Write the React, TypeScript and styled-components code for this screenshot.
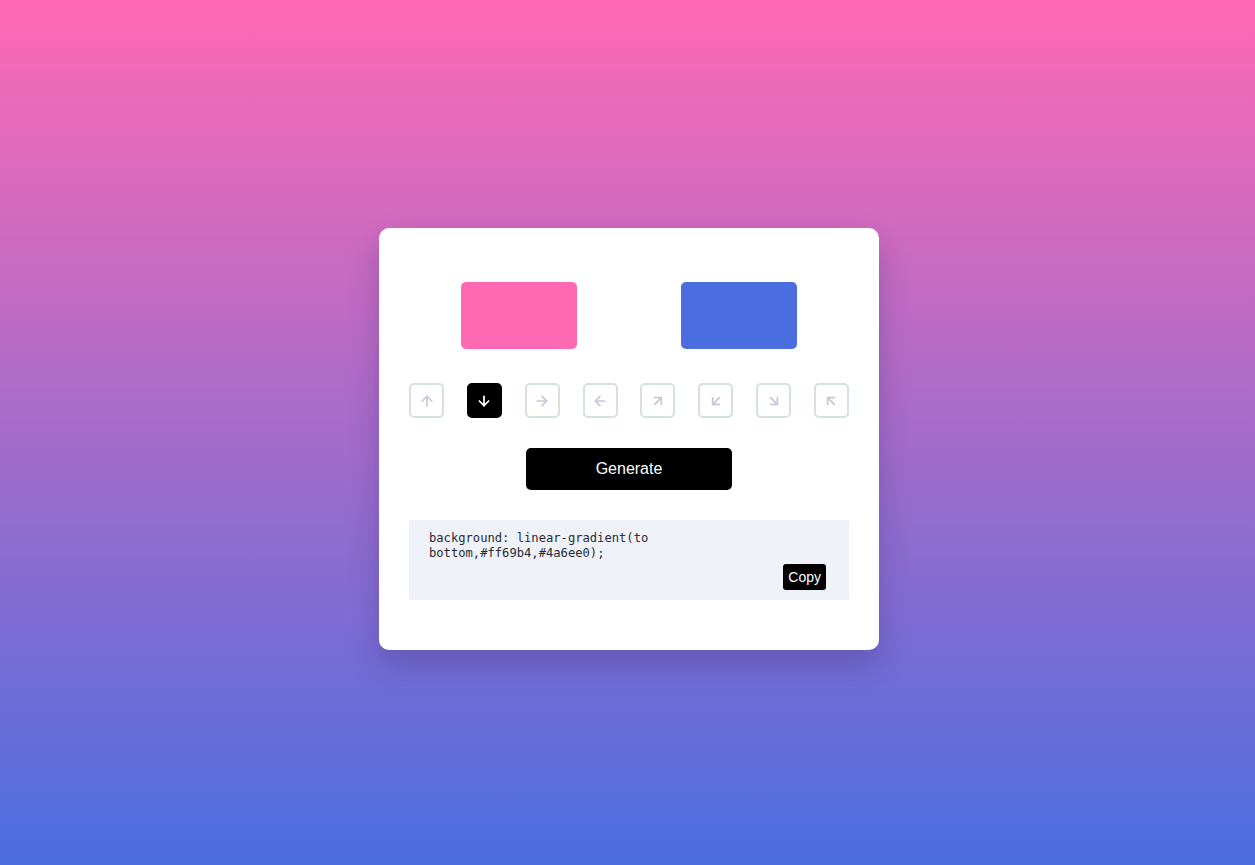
import React, { useState } from "react";
import styled, { createGlobalStyle } from "styled-components";
import {
  ArrowUp,
  ArrowDown,
  ArrowRight,
  ArrowLeft,
  ArrowUpRight,
  ArrowDownLeft,
  ArrowDownRight,
  ArrowUpLeft,
} from "lucide-react";

const Global = createGlobalStyle`
  html, body { margin: 0; padding: 0; }
  body { font-family: "Liberation Sans", Arial, sans-serif; }
`;

const Page = styled.div`
  width: 100%;
  min-height: 865px;
  background: linear-gradient(to bottom, #ff69b4, #4a6ee0);
  display: flex;
  justify-content: center;
  padding-top: 228px;
  padding-left: 3px;
  box-sizing: border-box;
`;

const Card = styled.div`
  width: 500px;
  height: 422px;
  background: #fff;
  border-radius: 10px;
  box-shadow: 0 15px 30px rgba(60, 40, 110, 0.3);
  padding: 54px 30px 30px;
  box-sizing: border-box;
  display: flex;
  flex-direction: column;
`;

const Swatches = styled.div`
  display: flex;
  justify-content: space-around;
`;

const Swatch = styled.div<{ $c: string }>`
  width: 116px;
  height: 67px;
  border-radius: 5px;
  background: ${(p) => p.$c};
`;

const Directions = styled.div`
  display: flex;
  justify-content: space-between;
  margin-top: 34px;
`;

const DirButton = styled.button<{ $active: boolean }>`
  width: 35px;
  height: 35px;
  box-sizing: border-box;
  border-radius: 5px;
  border: 2px solid ${(p) => (p.$active ? "#000" : "#d5e1dd")};
  background: ${(p) => (p.$active ? "#000" : "#fff")};
  color: ${(p) => (p.$active ? "#fff" : "#c9c6d8")};
  display: flex;
  align-items: center;
  justify-content: center;
  padding: 0;
  cursor: pointer;
`;

const GenerateButton = styled.button`
  align-self: center;
  margin-top: 30px;
  width: 206px;
  height: 42px;
  border: none;
  border-radius: 5px;
  background: #000;
  color: #fff;
  font-family: "Liberation Sans", Arial, sans-serif;
  font-size: 16px;
  cursor: pointer;
`;

const CodeBox = styled.div`
  margin-top: 30px;
  height: 80px;
  background: #eff2f9;
  box-sizing: border-box;
  padding: 11px 23px 10px 20px;
  display: flex;
  flex-direction: column;
`;

const Code = styled.p`
  margin: 0;
  font-family: "DejaVu Sans Mono", monospace;
  font-size: 12.15px;
  line-height: 15px;
  color: #2a2a35;
  max-width: 245px;
`;

const CopyButton = styled.button`
  align-self: flex-end;
  margin-top: auto;
  height: 26px;
  padding: 0 5px;
  border: none;
  border-radius: 3px;
  background: #000;
  color: #fff;
  font-family: "Liberation Sans", Arial, sans-serif;
  font-size: 14px;
  cursor: pointer;
`;

const dirs = [
  { name: "top", Icon: ArrowUp },
  { name: "bottom", Icon: ArrowDown },
  { name: "right", Icon: ArrowRight },
  { name: "left", Icon: ArrowLeft },
  { name: "top right", Icon: ArrowUpRight },
  { name: "bottom left", Icon: ArrowDownLeft },
  { name: "bottom right", Icon: ArrowDownRight },
  { name: "top left", Icon: ArrowUpLeft },
];

export default function App() {
  const [dir, setDir] = useState("bottom");
  const c1 = "#ff69b4";
  const c2 = "#4a6ee0";
  return (
    <>
      <Global />
      <Page>
        <Card>
          <Swatches>
            <Swatch $c={c1} />
            <Swatch $c={c2} />
          </Swatches>
          <Directions>
            {dirs.map(({ name, Icon }) => (
              <DirButton key={name} $active={dir === name} onClick={() => setDir(name)}>
                <Icon size={16} strokeWidth={2.6} />
              </DirButton>
            ))}
          </Directions>
          <GenerateButton>Generate</GenerateButton>
          <CodeBox>
            <Code>background: linear-gradient(to {dir},{c1},{c2});</Code>
            <CopyButton>Copy</CopyButton>
          </CodeBox>
        </Card>
      </Page>
    </>
  );
}
